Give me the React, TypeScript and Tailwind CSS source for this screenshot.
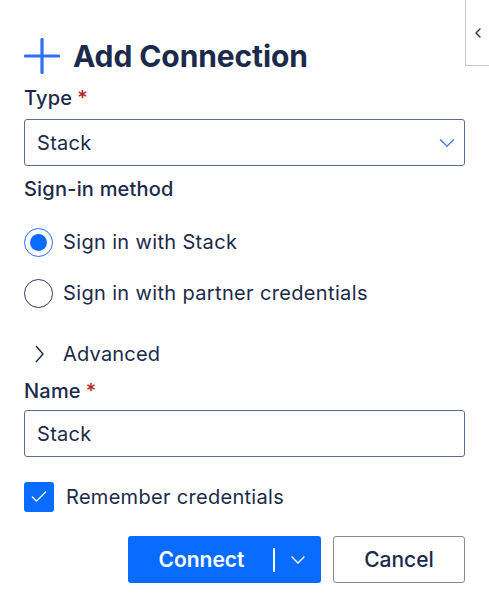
import { ChevronDown, ChevronLeft, Check } from 'lucide-react'

const font = { fontFamily: 'Inter, "Noto Sans", sans-serif' }

function Label({ text, required }: { text: string; required?: boolean }) {
  return (
    <div className="text-[20px] font-medium text-[#1b2a4a] leading-[24px] tracking-[0.2px]">
      {text}
      {required && <span className="text-[#b3261e] ml-[5px]">*</span>}
    </div>
  )
}

function Radio({ checked, label }: { checked?: boolean; label: string }) {
  return (
    <div className="flex items-center gap-[10px] h-[30px]">
      <span
        className={
          checked
            ? 'w-[29px] h-[29px] rounded-full border border-[#1f6fff] flex items-center justify-center'
            : 'w-[29px] h-[29px] rounded-full border border-[#2b3a5c]'
        }
      >
        {checked && <span className="w-[17px] h-[17px] rounded-full bg-[#0a6cff]" />}
      </span>
      <span className="text-[20px] text-[#1b2a4a] tracking-[0.35px]">{label}</span>
    </div>
  )
}

export default function App() {
  return (
    <div className="relative w-[489px] h-[596px] bg-white overflow-hidden" style={font}>
      <div className="absolute right-0 top-0 w-[24px] h-[66px] border-l border-b border-[#c8c8c8] flex items-center justify-center">
        <ChevronLeft className="w-[16px] h-[16px] text-[#333]" strokeWidth={2} />
      </div>

      <div className="pl-[24px] pr-[24px] pt-[36px] flex flex-col">
        <div className="flex items-center gap-[13px] h-[40px]">
          <svg width="36" height="36" viewBox="0 0 36 36" className="shrink-0">
            <path d="M18 1.5v33M1.5 18h33" stroke="#2f6ff0" strokeWidth="3.2" strokeLinecap="round" />
          </svg>
          <span className="text-[30px] font-bold text-[#1b2a4a] tracking-[-0.1px]">Add Connection</span>
        </div>

        <div className="mt-[10px]">
          <Label text="Type" required />
        </div>
        <div className="mt-[9px] h-[47px] border border-[#5b6c94] rounded-[3px] flex items-center justify-between pl-[12px] pr-[4px]">
          <span className="text-[20px] text-[#1b2a4a] tracking-[0.3px]">Stack</span>
          <ChevronDown className="w-[26px] h-[26px] text-[#4a7fe0]" strokeWidth={1.3} />
        </div>

        <div className="mt-[11px]">
          <Label text="Sign-in method" />
        </div>

        <div className="mt-[26px] flex flex-col gap-[21px]">
          <Radio checked label="Sign in with Stack" />
          <Radio label="Sign in with partner credentials" />
        </div>

        <div className="mt-[34px] flex items-center gap-[19px] h-[24px] pl-[11px]">
          <svg width="9" height="18" viewBox="0 0 9 18" className="shrink-0">
            <path d="M1 1l7 8-7 8" fill="none" stroke="#1b2a4a" strokeWidth="1.4" />
          </svg>
          <span className="text-[20px] text-[#1b2a4a] tracking-[0.2px]">Advanced</span>
        </div>

        <div className="mt-[13px]">
          <Label text="Name" required />
        </div>
        <div className="mt-[7px] h-[47px] border border-[#5b6c94] rounded-[3px] flex items-center pl-[12px]">
          <span className="text-[20px] text-[#1b2a4a] tracking-[0.3px]">Stack</span>
        </div>

        <div className="mt-[25px] flex items-center gap-[12px]">
          <span className="w-[30px] h-[30px] rounded-[3px] bg-[#0a6cff] flex items-center justify-center">
            <Check className="w-[20px] h-[20px] text-white" strokeWidth={1.5} />
          </span>
          <span className="text-[20px] text-[#1b2a4a] tracking-[0.3px]">Remember credentials</span>
        </div>

        <div className="mt-[24px] flex justify-end gap-[12px]">
          <button className="w-[193px] h-[47px] rounded-[3px] bg-[#0a6cff] flex items-center text-white">
            <span className="flex-1 text-center text-[21px] font-semibold pl-[2px]">Connect</span>
            <span className="w-[2px] h-[24px] bg-white" />
            <span className="w-[46px] flex items-center justify-center">
              <ChevronDown className="w-[24px] h-[24px]" strokeWidth={1.4} />
            </span>
          </button>
          <button className="w-[132px] h-[47px] rounded-[3px] border border-[#8a8a8a] bg-white text-[21px] font-medium text-[#1b2a4a]">
            Cancel
          </button>
        </div>
      </div>
    </div>
  )
}
